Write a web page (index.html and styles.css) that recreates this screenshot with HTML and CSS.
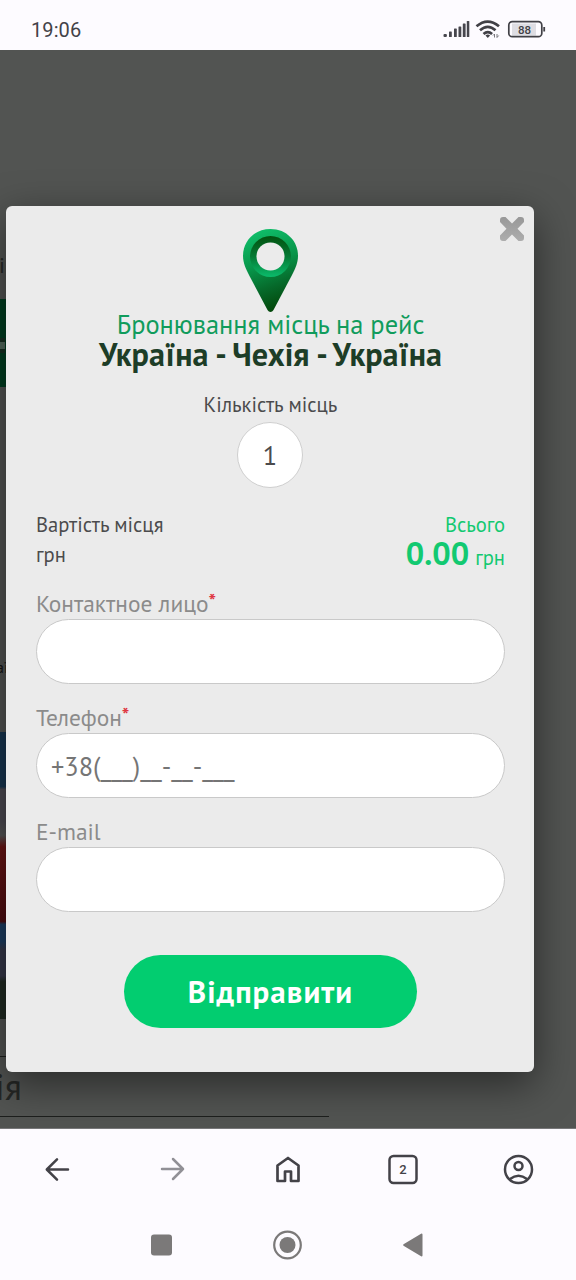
FILE: index.html
```html
<!DOCTYPE html>
<html lang="uk">
<head>
<meta charset="utf-8">
<title>Бронювання місць</title>
<link rel="stylesheet" href="styles.css">
</head>
<body>
<header class="status">
  <time class="clock">19:06</time>
  <svg class="indicators" width="104" height="20" viewBox="0 0 104 20">
    <g fill="#47464d">
      <rect x="0.5" y="15" width="3.4" height="3" rx="1"/>
      <rect x="6" y="12.500" width="2.8" height="5.5" rx=".6"/>
      <rect x="11" y="9.500" width="2.8" height="8.500" rx=".6"/>
      <rect x="15.500" y="7.500" width="2.800" height="10.500" rx=".6"/>
      <rect x="19.800" y="4.500" width="2.800" height="13.500" rx=".6"/>
      <rect x="23.800" y="2" width="2.500" height="16" rx=".6"/>
    </g>
    <g fill="none" stroke="#414046" stroke-width="2.700">
      <path d="M33.500 7.300q11-9.500 22.500 0"/>
      <path d="M37 11.300q7.800-6.800 15.500 0"/>
      <path d="M40.500 15q4.300-3.800 8.600 0"/>
    </g>
    <path d="M42.500 16.500q2.300-1.800 4.600 0l-2.300 2.500z" fill="#414046"/>
    <path d="M51.500 18.500v-3.500l-1.500 1.500M54 15v3.500l1.700-2" fill="none" stroke="#77767c"/>
    <rect x="69" y="4.500" width="24" height="12" fill="#dedde3"/>
    <rect x="65.800" y="2.700" width="33" height="15" rx="3.500" fill="none" stroke="#414046" stroke-width="1.700"/>
    <path d="M100.300 8h1.800v4.500h-1.800z" fill="#414046"/>
    <text x="81.500" y="14.500" class="charge">88</text>
  </svg>
</header>

<main class="page">
  <div class="behind">
    <span class="scrap scrap-top">і</span>
    <div class="green-block"></div>
    <div class="green-mark"></div>
    <span class="scrap scrap-mid">аї</span>
    <div class="photo"></div>
    <div class="rule rule-short"></div>
    <span class="scrap scrap-title">ія</span>
    <div class="rule rule-long"></div>
  </div>

  <form class="modal">
    <svg class="close" width="26" height="26" viewBox="0 0 26 26">
      <defs><linearGradient id="cross" x2="0" y2="1"><stop stop-color="#989898"/><stop offset="1" stop-color="#adadad"/></linearGradient></defs>
      <path fill="url(#cross)" d="M1 4Q1 1 4 1h2.500L13 7.500 19.500 1H22q3 0 3 3v2L18.500 12.800 25 19.500V22q0 3-3 3h-2.500L13 18.500 6.500 25H4q-3 0-3-3v-2.500l6.500-6.700L1 6z"/>
    </svg>
    <svg class="pin" width="57" height="86" viewBox="0 0 57 86">
      <defs>
        <linearGradient id="body" x1=".35" y1="0" x2=".6" y2="1"><stop stop-color="#0fbd69"/><stop offset=".42" stop-color="#079348"/><stop offset=".7" stop-color="#06692a"/><stop offset="1" stop-color="#024407"/></linearGradient>
        <linearGradient id="ring" x2="0" y2="1"><stop stop-color="#02510f"/><stop offset=".5" stop-color="#047a34"/><stop offset="1" stop-color="#0bbb6b"/></linearGradient>
      </defs>
      <path fill="url(#body)" d="M28.500 1C12.500 1 1 13 1 28c0 7 3 13 6 19l18.500 35c1.500 2.500 4.500 2.500 6 0L50 47c3-6 6-12 6-19C56 13 44.500 1 28.500 1z"/>
      <circle cx="28.500" cy="28.500" r="20.500" fill="url(#ring)"/>
      <circle cx="28.500" cy="28.500" r="14" fill="#ebebeb"/>
    </svg>
    <p class="lead">Бронювання місць на рейс</p>
    <h1 class="route">Україна - Чехія - Україна</h1>
    <p class="seats">Кількість місць</p>
    <div class="count">1</div>

    <section class="price">
      <div class="price-seat"><p>Вартість місця</p><p>грн</p></div>
      <div class="price-total"><p>Всього</p><p class="sum"><b>0.00</b><span>грн</span></p></div>
    </section>

    <div class="field"><label>Контактное лицо<i>*</i></label><div class="box"></div></div>
    <div class="field"><label>Телефон<i>*</i></label><div class="box">+38(___)__-__-___</div></div>
    <div class="field"><label>E-mail</label><div class="box"></div></div>
    <div class="send">Відправити</div>
  </form>
</main>

<nav class="browser">
  <svg viewBox="0 0 32 32"><path d="M26 16.500H5M15 6.300L4.800 16.500 15 26.700"/></svg>
  <svg class="dim" viewBox="0 0 32 32"><path d="M5 16h21M16 6l10 10-10 10"/></svg>
  <svg viewBox="0 0 32 32"><path d="M5.500 12.500L16 5l10.500 7.500V28H19V18.500h-6V28H5.500z" stroke-width="2.700"/></svg>
  <svg viewBox="0 0 32 32"><rect x="2.500" y="3" width="27" height="27" rx="4"/><text x="16" y="21.300">2</text></svg>
  <svg viewBox="0 0 32 32"><circle cx="16.500" cy="16.500" r="13.500"/><circle cx="16.500" cy="13" r="4"/><path d="M8 26q8.500-6.500 17 0"/></svg>
</nav>
<nav class="system">
  <svg viewBox="0 0 32 32"><rect x="6" y="5.500" width="21" height="21" rx="3"/></svg>
  <svg viewBox="0 0 32 32"><circle cx="15.500" cy="16" r="13.300" fill="none" stroke="#7b7979" stroke-width="2.200"/><circle cx="15.500" cy="16" r="8"/></svg>
  <svg viewBox="0 0 32 32"><path d="M4.500 15.300L22.500 4.500q1 0 1 1v21q0 1-1 1L4.500 16.700q-.8-.7 0-1.400z"/></svg>
</nav>
</body>
</html>
```
FILE: styles.css
```css
* { box-sizing: border-box; }
body {
  margin: 0;
  height: 1280px;
  display: flex;
  flex-direction: column;
  overflow: hidden;
  background: #fdfbff;
  font-family: "PT Sans", "Noto Sans", sans-serif;
}
p, h1 { margin: 0; }
svg { display: block; flex: none; }

.status { height: 50px; flex: none; display: flex; justify-content: space-between; padding: 19px 29px 0 31px; }
.clock { font: 20px/22px Roboto, sans-serif; color: #434248; letter-spacing: .1px; }
.charge { font: 500 11.5px Roboto, sans-serif; fill: #414046; text-anchor: middle; }

.page { position: relative; height: 1079px; flex: none; overflow: hidden; background: #525452; padding: 156px 0 0 6px; border-bottom: 1px solid #777779; }
.behind { position: absolute; inset: 0; }
.scrap { position: absolute; color: #252725; line-height: 1; white-space: nowrap; }
.scrap-top { left: -1px; top: 204px; font-size: 22px; }
.scrap-mid { left: -4px; top: 609px; font-size: 16px; color: #151515; }
.scrap-title { left: -5px; top: 1019px; font-size: 36px; }
.green-block { position: absolute; left: 0; top: 249px; width: 8px; height: 88px; background: #003d20; }
.green-mark { position: absolute; left: 0; top: 288px; width: 5px; height: 15px; background: #52695c; border: solid #172e21; border-width: 4px 0; }
.photo { position: absolute; left: 0; top: 682px; width: 8px; height: 287px; background: linear-gradient(#17354f 0 19%, #4d4a52 20% 31%, #555 36%, #6a1515 40%, #4b0c10 66%, #1c3c60 67% 73%, #353748 76% 85%, #202a22 87%); }
.rule { position: absolute; left: 0; height: 1px; background: #1d1f1d; }
.rule-short { top: 1006px; width: 10px; }
.rule-long { top: 1066px; width: 329px; }

.modal { position: relative; display: flex; flex-direction: column; width: 528px; height: 866px; padding: 22px 29px 0 30px; background: #ebebeb; border-radius: 6px; box-shadow: 0 12px 40px rgba(0, 0, 0, .5); color: #4b4b4d; }
.close { position: absolute; right: 9px; top: 10px; }
.pin { align-self: center; }
.lead, .route, .seats { text-align: center; white-space: nowrap; }
.lead { margin-top: -5px; height: 30px; font-size: 26.4px; line-height: 31px; color: #109c5c; }
.route { margin: 0 -10px; height: 30px; font-size: 32.2px; line-height: 31px; color: #1d3d27; }
.seats { margin-top: 20px; height: 33px; font-size: 20.600px; line-height: 31px; }
.count { align-self: center; display: grid; place-items: center; width: 66px; height: 66px; margin-right: 1px; border: 1px solid #cfcfcf; border-radius: 50%; background: #fff; font-size: 26.400px; }
.price { display: flex; justify-content: space-between; height: 79px; margin-top: 22px; font-size: 20.600px; line-height: 30px; }
.price-total { color: #12c971; text-align: right; }
.sum { display: flex; justify-content: flex-end; align-items: baseline; gap: 6px; margin-top: -2px; }
.sum b { font-size: 32.500px; }
.field { height: 114px; }
.field label { display: flex; height: 30px; font-size: 23.400px; line-height: 29px; color: #8b8b8b; }
.field i { font-style: normal; font-size: 20px; font-weight: bold; line-height: 25px; color: #df3340; }
.box { display: flex; align-items: center; height: 65px; padding-left: 14px; border: 1px solid #c9c9c9; border-radius: 33px; background: #fff; font-size: 26.400px; color: #757575; }
.send { align-self: center; display: grid; place-items: center; width: 293px; height: 73px; margin-top: 24px; border-radius: 37px; background: #02cd70; color: #fff; font-size: 31px; font-weight: bold; letter-spacing: 1px; }

.browser { display: flex; justify-content: space-between; height: 75px; flex: none; padding: 24px 42px 0 42px; }
.browser svg { width: 32px; height: 32px; fill: none; stroke: #434248; stroke-width: 2.500; stroke-linecap: round; stroke-linejoin: round; }
.browser .dim { stroke: #919096; }
.browser text { font: 500 13px Roboto, sans-serif; fill: #434248; stroke: none; text-anchor: middle; }
.system { display: flex; justify-content: space-between; padding: 25px 145px 0; }
.system svg { width: 32px; height: 32px; fill: #7b7979; }
```
